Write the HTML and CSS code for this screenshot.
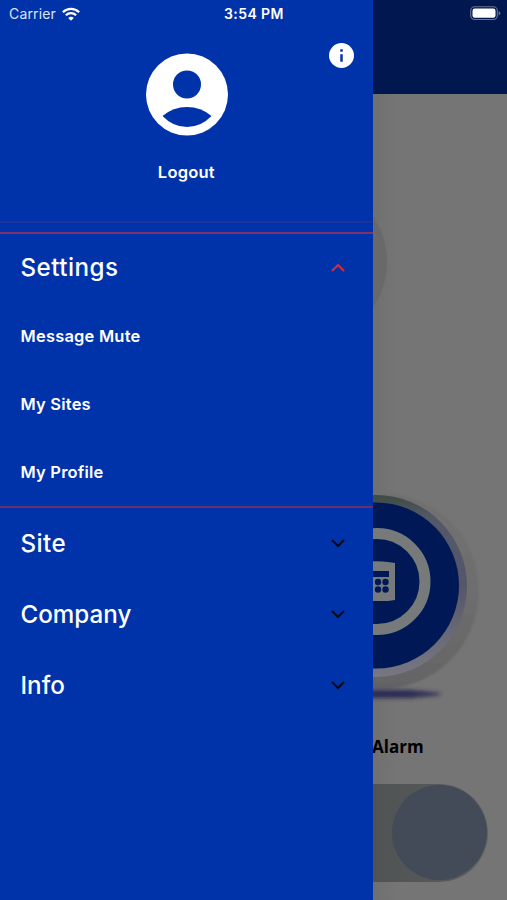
FILE: index.html
```html
<!DOCTYPE html>
<html lang="en">
<head>
<meta charset="utf-8">
<title>Menu</title>
<link rel="stylesheet" href="styles.css">
</head>
<body>
<div class="screen">
  <main class="page">
    <div class="topbar"></div>
    <svg class="art" viewBox="372 94 135 636" aria-hidden="true">
      <defs>
        <linearGradient id="rim" x1="0" y1="0" x2="0" y2="1">
          <stop offset="0" stop-color="#3d4b43"/>
          <stop offset=".12" stop-color="#535867"/>
          <stop offset=".5" stop-color="#54566a"/>
          <stop offset=".8" stop-color="#6c6b78"/>
          <stop offset="1" stop-color="#777783"/>
        </linearGradient>
        <linearGradient id="halo" x1="0" y1="0" x2="0" y2="1">
          <stop offset="0" stop-color="#707070"/>
          <stop offset=".5" stop-color="#6e6e6e"/>
          <stop offset="1" stop-color="#646465"/>
        </linearGradient>
        <filter id="soft" x="-20%" y="-100%" width="140%" height="300%"><feGaussianBlur stdDeviation="2"/></filter>
        <filter id="edge"><feGaussianBlur stdDeviation="1"/></filter>
      </defs>
      <circle cx="306" cy="262" r="81" fill="#696969"/>
      <circle cx="381" cy="591" r="98" fill="url(#halo)" filter="url(#edge)"/>
      <ellipse cx="376" cy="586" rx="91" ry="91" fill="url(#rim)"/>
      <circle cx="376" cy="585.500" r="83" fill="#001956"/>
      <circle cx="377" cy="581.500" r="48" fill="none" stroke="#777a7b" stroke-width="11"/>
      <path d="M360 563q14-3 28-1l7 1v37l-7 1h-28z" fill="#777a7b"/>
      <path d="M360 571h29v6h-29z" fill="#001956"/>
      <g fill="#001956"><circle cx="378" cy="582" r="3.200"/><circle cx="385.500" cy="582" r="3.200"/><circle cx="378" cy="589.500" r="3.200"/><circle cx="385.500" cy="589.500" r="3.200"/></g>
      <path d="M350 690h60l30 3v2l-30 3h-60z" fill="#2b2b55" filter="url(#soft)"/>
    </svg>
    <div class="label">Alarm</div>
    <div class="toggle"><span class="knob"></span></div>
  </main>

  <nav class="drawer">
    <header class="account">
      <svg class="info" viewBox="2 2 20 20"><path fill="#fff" d="M12 2a10 10 0 1 0 0 20 10 10 0 0 0 0-20zm1 15h-2v-6h2zm0-8h-2V7h2z"/></svg>
      <svg class="avatar" viewBox="0 0 82 82"><circle cx="41" cy="40.500" r="41" fill="#fff"/><circle cx="41" cy="30.500" r="14" fill="#0033a9"/><path d="M16.500 62Q27 53 41 53T65.500 62Q55 73 41 73T16.500 62z" fill="#0033a9"/></svg>
      <span class="logout">Logout</span>
    </header>
    <section class="group open">
      <div class="row"><span class="wide">Settings</span><svg class="chev" viewBox="0 0 16 10"><path d="M2 8l6-6 6 6"/></svg></div>
      <a class="item">Message Mute</a>
      <a class="item">My Sites</a>
      <a class="item">My Profile</a>
    </section>
    <section class="group">
      <div class="row"><span class="wide">Site</span><svg class="chev" viewBox="0 0 16 10"><path d="M2 2l6 6 6-6"/></svg></div>
      <div class="row"><span>Company</span><svg class="chev" viewBox="0 0 16 10"><path d="M2 2l6 6 6-6"/></svg></div>
      <div class="row"><span>Info</span><svg class="chev" viewBox="0 0 16 10"><path d="M2 2l6 6 6-6"/></svg></div>
    </section>
  </nav>

  <div class="status">
    <span class="carrier">Carrier</span>
    <svg class="wifi" viewBox="0 0 18 14"><g fill="none" stroke="#fff" stroke-width="2.300"><path d="M.9 5.200a11.500 11.500 0 0 1 16.200 0"/><path d="M3.900 8.300a7.200 7.200 0 0 1 10.200 0"/></g><path d="M9 13.800L6.200 11a4 4 0 0 1 5.600 0z" fill="#fff"/></svg>
    <span class="time">3:54 PM</span>
    <svg class="battery" viewBox="0 0 31 15"><rect x=".7" y=".7" width="26.600" height="12.800" rx="4" fill="none" stroke="#6b7593" stroke-width="1.100"/><rect x="2.500" y="2.500" width="23" height="9.200" rx="2.300" fill="#fff"/><path d="M28.600 5v4.400q1.700-.7 1.700-2.200T28.600 5z" fill="#6b7593"/></svg>
  </div>
</div>
</body>
</html>
```
FILE: styles.css
```css
* { box-sizing: border-box; }
body { margin: 0; font-family: Inter, "Liberation Sans", sans-serif; }
.screen { position: relative; width: 507px; height: 900px; overflow: hidden; background: #757575; }

.page { display: flex; flex-direction: column; height: 900px; padding-left: 372px; background: linear-gradient(90deg, #6f6f6f 372px, #757575 397px); }
.topbar { height: 94px; background: #00174f; flex: none; }
.art { display: block; width: 135px; height: 636px; flex: none; }
.label { height: 54px; line-height: 33px; font-family: "Open Sans", sans-serif; font-size: 17px; font-weight: 700; color: #000; }
.toggle { display: flex; justify-content: flex-end; width: 116px; height: 98px; padding: 1px; border-radius: 0 49px 49px 0; background: linear-gradient(90deg, #505354, #56595a 60%, #5e6062); }
.knob { width: 95px; height: 95px; border-radius: 50%; background: #444b58; }

.drawer { position: absolute; top: 0; left: 0; width: 372.6px; height: 900px; background: #0033a9; color: #fff; }
.account { display: flex; flex-direction: column; align-items: center; height: 223px; border-bottom: 2px solid #1d339b; }
.info { align-self: flex-end; width: 25px; height: 25px; margin: 43px 18.6px 0 0; flex: none; }
.avatar { width: 82px; height: 82px; margin: -14.5px 0 0 1px; flex: none; overflow: visible; }
.logout { margin-top: 24.5px; line-height: 24px; font-size: 16.5px; font-weight: 600; letter-spacing: .2px; }
.group.open { height: 276px; margin-top: 8.5px; border-top: 2px solid #7e316a; border-bottom: 2px solid #68306f; }
.row { display: flex; align-items: center; justify-content: space-between; height: 71px; padding: 0 26.5px 0 20.5px; font-size: 24.2px; font-weight: 500; letter-spacing: 0; }
.wide { letter-spacing: .45px; }
.chev { width: 16px; height: 10px; fill: none; stroke: #060a18; stroke-width: 2.2; }
.open .chev { stroke: #cd2c43; }
.item { display: flex; align-items: center; height: 68.3px; padding-left: 20.5px; font-size: 16.5px; font-weight: 600; letter-spacing: .2px; }
.open .row { height: 68px; }

.status { position: absolute; top: 0; left: 0; display: grid; grid-template-columns: 53px 162px 60px 1fr 31px; align-items: center; width: 507px; height: 27px; padding: 0 6px 0 9px; color: #fff; }
.carrier { font-size: 14px; letter-spacing: .15px; color: #dce4f5; }
.wifi { width: 18px; height: 14px; }
.time { font-size: 14px; font-weight: 600; letter-spacing: .4px; white-space: nowrap; }
.battery { grid-column: 5; width: 31px; height: 15px; }
```
